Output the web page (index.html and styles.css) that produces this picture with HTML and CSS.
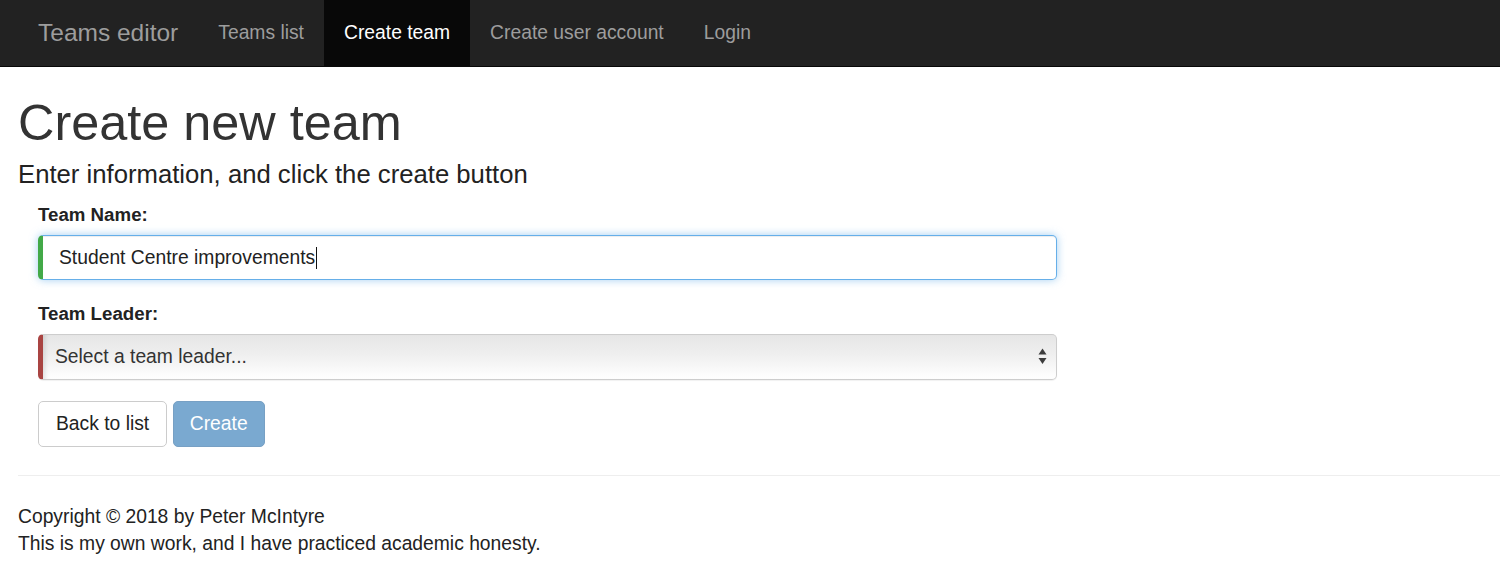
FILE: index.html
```html
<!DOCTYPE html>
<html lang="en">
<head>
<meta charset="utf-8">
<title>Create team</title>
<link rel="stylesheet" href="styles.css">
</head>
<body>
<nav class="navbar">
  <a class="brand" href="#">Teams editor</a>
  <ul class="nav">
    <li><a href="#">Teams list</a></li>
    <li class="active"><a href="#">Create team</a></li>
    <li><a href="#">Create user account</a></li>
    <li><a href="#">Login</a></li>
  </ul>
</nav>
<main class="container">
  <h1 class="title">Create new team</h1>
  <h4 class="subtitle">Enter information, and click the create button</h4>
  <form class="form">
    <div class="group">
      <label class="label" for="name">Team Name:</label>
      <div class="input valid"><span class="value">Student Centre improvements</span><span class="caret"></span></div>
    </div>
    <div class="group">
      <label class="label" for="leader">Team Leader:</label>
      <div class="select-wrap">
        <div class="select invalid" id="leader">Select a team leader...</div>
        <svg class="arrows" width="9" height="17" viewBox="0 0 9 17"><path d="M4.5 0.5 L8.5 6.5 L0.5 6.5 Z" fill="#3c3c3c"/><path d="M0.5 10 L8.5 10 L4.5 16 Z" fill="#3c3c3c"/></svg>
      </div>
    </div>
    <div class="actions">
      <button type="button" class="btn btn-default">Back to list</button>
      <button type="button" class="btn btn-primary" disabled>Create</button>
    </div>
  </form>
  <hr class="rule">
  <footer class="footer">
    <p>Copyright © 2018 by Peter McIntyre</p>
    <p>This is my own work, and I have practiced academic honesty.</p>
  </footer>
</main>
</body>
</html>
```

FILE: styles.css
```css
* { box-sizing: border-box; }
html, body { margin: 0; padding: 0; }
body {
  font-family: "Liberation Sans", Arial, Helvetica, sans-serif;
  font-size: 19.3px;
  line-height: 27.3px;
  color: #333;
  background: #fff;
  width: 1500px;
  overflow: hidden;
}
.navbar {
  display: flex;
  align-items: stretch;
  height: 67px;
  background: #222;
  border-bottom: 1px solid #080808;
  padding-left: 18px;
}
.brand {
  display: block;
  padding: 0 20px;
  font-size: 24.5px;
  line-height: 66px;
  color: #9d9d9d;
  text-decoration: none;
}
.nav {
  display: flex;
  margin: 0;
  padding: 0;
  list-style: none;
}
.nav li a {
  display: block;
  padding: 0 20px;
  font-size: 19.3px;
  line-height: 66px;
  color: #9d9d9d;
  text-decoration: none;
}
.nav li.active a {
  background: #080808;
  color: #fff;
}
.container {
  padding: 28px 0 0 18px;
}
.title {
  margin: 0;
  font-size: 50.4px;
  line-height: 55px;
  font-weight: 400;
  color: #333;
}
.subtitle {
  margin: 9.5px 0 0;
  font-size: 25.7px;
  line-height: 28px;
  font-weight: 400;
  color: #222;
}
.form {
  padding-left: 20px;
  margin-top: 14.5px;
  width: 1039px;
}
.group { margin-bottom: 21px; }
.label {
  display: block;
  font-size: 18.7px;
  line-height: 26px;
  font-weight: 700;
  color: #222;
  margin-bottom: 7px;
}
.input {
  display: flex;
  align-items: center;
  height: 45px;
  padding: 0 16px;
  border: 1px solid #66afe9;
  border-radius: 5px;
  box-shadow: inset 0 1px 1px rgba(0,0,0,.075), 0 0 8px rgba(102,175,233,.6);
  font-size: 19.3px;
  color: #222;
  background: #fff;
}
.input.valid { border-left: 5px solid #42a948; }
.caret {
  display: inline-block;
  width: 1px;
  height: 22px;
  background: #111;
  margin-left: 1px;
}
.select-wrap { position: relative; }
.select {
  height: 45.5px;
  display: flex;
  align-items: center;
  padding: 0 12px;
  border: 1px solid #cdcdcd;
  border-radius: 5px;
  background: linear-gradient(#e6e6e6, #efefef 45%, #fbfbfb 85%, #fff);
  box-shadow: inset 6px 0 5px -4px rgba(0,0,0,.12), 0 1px 1px rgba(0,0,0,.06);
  font-size: 19.3px;
  color: #333;
}
.select.invalid { border-left: 5px solid #a94442; }
.arrows {
  position: absolute;
  right: 10px;
  top: 14px;
}
.actions {
  display: flex;
  gap: 5.5px;
  padding-top: 0.5px;
}
.btn {
  height: 45.7px;
  padding: 0 17px;
  font-family: inherit;
  font-size: 19.3px;
  border-radius: 5px;
  border: 1px solid #ccc;
  background: #fff;
  color: #222;
  cursor: pointer;
}
.btn-primary {
  background: #7aa9d0;
  border-color: #77a0c4;
  color: #fff;
  padding: 0 16px;
}
.rule {
  margin: 28px 0 0;
  border: 0;
  border-top: 1px solid #eee;
  height: 0;
}
.footer {
  padding-top: 27.3px;
}
.footer p { margin: 0; color: #222; }
```
